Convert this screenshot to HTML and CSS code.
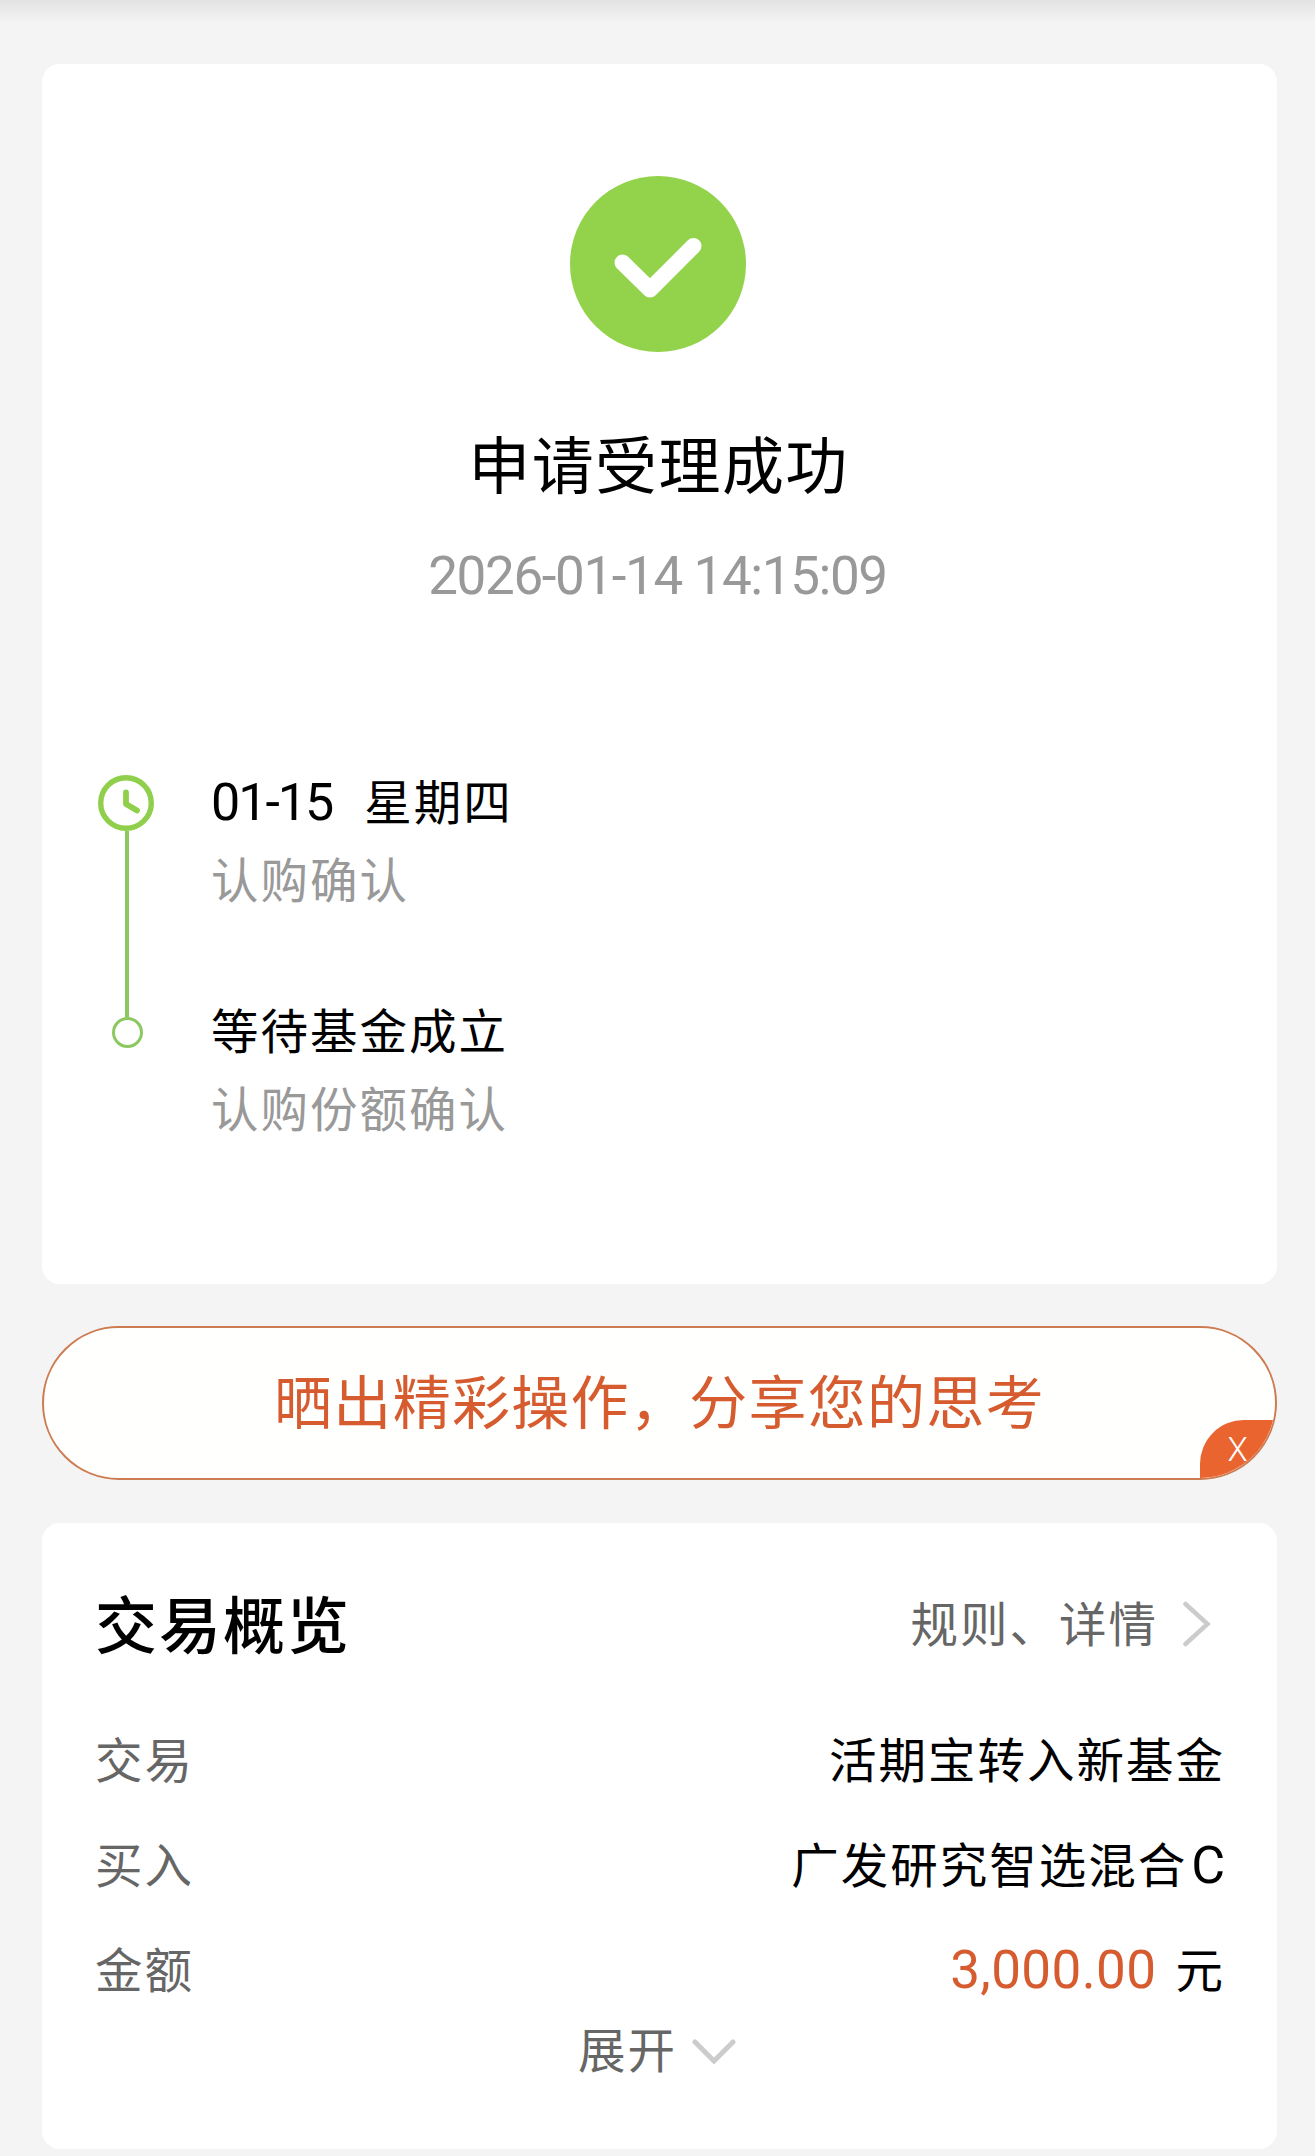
FILE: index.html
```
<!DOCTYPE html>
<html lang="zh-CN">
<head>
    <meta charset="UTF-8">
    <meta name="viewport" content="width=device-width, initial-scale=1.0">
    <title>申请受理成功</title>
    <link rel="stylesheet" href="styles.css">
</head>
<body>
    <div class="top-shadow"></div>
    <main>
        <section class="card result">
            <svg class="result-icon" viewBox="0 0 176 176">
                <circle cx="88" cy="88" r="88" fill="#92d34b"/>
                <path d="M52.5 86.5 L80 113.5 L123.5 70" fill="none" stroke="#fff" stroke-width="16" stroke-linecap="round" stroke-linejoin="round"/>
            </svg>
            <h1>申请受理成功</h1>
            <p class="result-time">2026-01-14 14:15:09</p>
            <div class="timeline">
                <div class="rail">
                    <svg class="rail-clock" viewBox="0 0 56 56">
                        <circle cx="28" cy="28" r="25.3" fill="none" stroke="#8fcf4c" stroke-width="5.4"/>
                        <path d="M28 17.5 V29 L39 35.5" fill="none" stroke="#8fcf4c" stroke-width="5.8" stroke-linecap="round" stroke-linejoin="round"/>
                    </svg>
                    <div class="rail-line"></div>
                    <div class="rail-dot"></div>
                </div>
                <ul class="steps">
                    <li>
                        <p class="step-title"><span class="num">01-15</span><span class="weekday">星期四</span></p>
                        <p class="step-desc">认购确认</p>
                    </li>
                    <li>
                        <p class="step-title">等待基金成立</p>
                        <p class="step-desc">认购份额确认</p>
                    </li>
                </ul>
            </div>
        </section>

        <div class="share">
            <span>晒出精彩操作，分享您的思考</span>
            <button class="share-close">X</button>
        </div>

        <section class="card overview">
            <div class="overview-head">
                <h2>交易概览</h2>
                <a class="rules">规则、详情
                    <svg class="arrow-right" viewBox="0 0 28 46"><path d="M2.5 3 L24.5 23 L2.5 43" fill="none" stroke="#ccc" stroke-width="4.5" stroke-linecap="round"/></svg>
                </a>
            </div>
            <dl>
                <div class="row"><dt>交易</dt><dd>活期宝转入新基金</dd></div>
                <div class="row"><dt>买入</dt><dd>广发研究智选混合<span class="fund-class">C</span></dd></div>
                <div class="row"><dt>金额</dt><dd><span class="amount">3,000.00</span>元</dd></div>
            </dl>
            <div class="expand">
                <span>展开</span>
                <svg class="arrow-down" viewBox="0 0 44 26"><path d="M3 3 L22 22 L41 3" fill="none" stroke="#ccc" stroke-width="5" stroke-linecap="round"/></svg>
            </div>
        </section>
    </main>
</body>
</html>
```
FILE: styles.css
```
:root {
    --green: #8cc860;
    --orange: #d65c30;
    --bg: #f4f4f4;
}
* {
    box-sizing: border-box;
}
body {
    margin: 0;
    height: 2156px;
    overflow: hidden;
    background: var(--bg);
    color: #000;
    font-family: "Noto Sans CJK SC", sans-serif;
    font-size: 47.5px;
    line-height: 60px;
    letter-spacing: 2px;
}
h1, h2, p, ul, dl, dd {
    margin: 0;
    padding: 0;
}
ul {
    list-style: none;
}
.top-shadow {
    height: 22px;
    background: linear-gradient(#e2e2e2, var(--bg));
}
main {
    padding: 42px 38px 0 42px;
}
.card {
    background: #fff;
    border-radius: 18px;
}

/* Result */
.result {
    height: 1220px;
    padding-top: 112px;
    display: flex;
    flex-direction: column;
    align-items: center;
}
.result-icon {
    width: 176px;
    height: 176px;
    margin-right: 3px;
}
.result h1 {
    margin-top: 70px;
    margin-right: 2px;
    font-size: 62px;
    line-height: 80px;
    font-weight: 400;
    letter-spacing: 1.4px;
}
.result-time {
    margin-top: 44px;
    margin-right: 4px;
    color: #999;
    font-family: Roboto, sans-serif;
    font-size: 53px;
    letter-spacing: -1.4px;
}
.timeline {
    display: flex;
    align-self: stretch;
    margin-top: 164px;
    padding-left: 56px;
}
.rail {
    width: 56px;
    padding-top: 5px;
    display: flex;
    flex-direction: column;
    align-items: center;
}
.rail-clock {
    width: 56px;
    height: 56px;
}
.rail-line {
    width: 4px;
    height: 186px;
    margin-left: 2px;
    background: var(--green);
}
.rail-dot {
    width: 31px;
    height: 31px;
    margin-left: 2px;
    border: 3px solid var(--green);
    border-radius: 50%;
}
.steps {
    margin-left: 57px;
}
.steps li {
    height: 229px;
}
.step-title {
    height: 60px;
}
.step-desc {
    margin-top: 18px;
    color: #999;
}
.num {
    font-family: Roboto, sans-serif;
    font-size: 52px;
    letter-spacing: -2px;
}
.weekday {
    margin-left: 32px;
}

/* Share */
.share {
    position: relative;
    height: 154px;
    margin: 42px 0 43px;
    padding-bottom: 9px;
    display: flex;
    align-items: center;
    justify-content: center;
    overflow: hidden;
    background: #fffffe;
    border: 2px solid #cd7c52;
    border-radius: 77px;
    color: var(--orange);
    font-size: 58px;
    letter-spacing: 1.3px;
}
.share-close {
    position: absolute;
    right: 0;
    bottom: 0;
    width: 75px;
    height: 58px;
    padding: 0;
    border: none;
    border-radius: 44px 0 0 0;
    background: #ea642f;
    color: #fff;
    font-family: Roboto, sans-serif;
    font-size: 33px;
    font-weight: 300;
}

/* Overview */
.overview {
    height: 626px;
    padding: 59px 52px 0 53px;
}
.overview-head {
    display: flex;
    justify-content: space-between;
    align-items: center;
    height: 80px;
}
.overview h2 {
    font-size: 62px;
    font-weight: 500;
}
.rules {
    display: flex;
    align-items: center;
    color: #666;
}
.arrow-right {
    width: 28px;
    height: 46px;
    margin: 4px 14px 0 25px;
}
.overview dl {
    margin-top: 66px;
}
.row {
    display: flex;
    justify-content: space-between;
    height: 105px;
}
dt {
    color: #666;
}
.fund-class {
    margin-left: 4px;
    font-family: Roboto, sans-serif;
    font-size: 52px;
    letter-spacing: 0;
}
.amount {
    margin-right: 19px;
    color: var(--orange);
    font-family: Roboto, sans-serif;
    font-size: 53px;
    letter-spacing: 0.4px;
}
.expand {
    display: flex;
    align-items: center;
    margin-top: -25px;
    padding-left: 483px;
    color: #666;
}
.arrow-down {
    width: 44px;
    height: 26px;
    margin: 8px 0 0 15px;
}
```
